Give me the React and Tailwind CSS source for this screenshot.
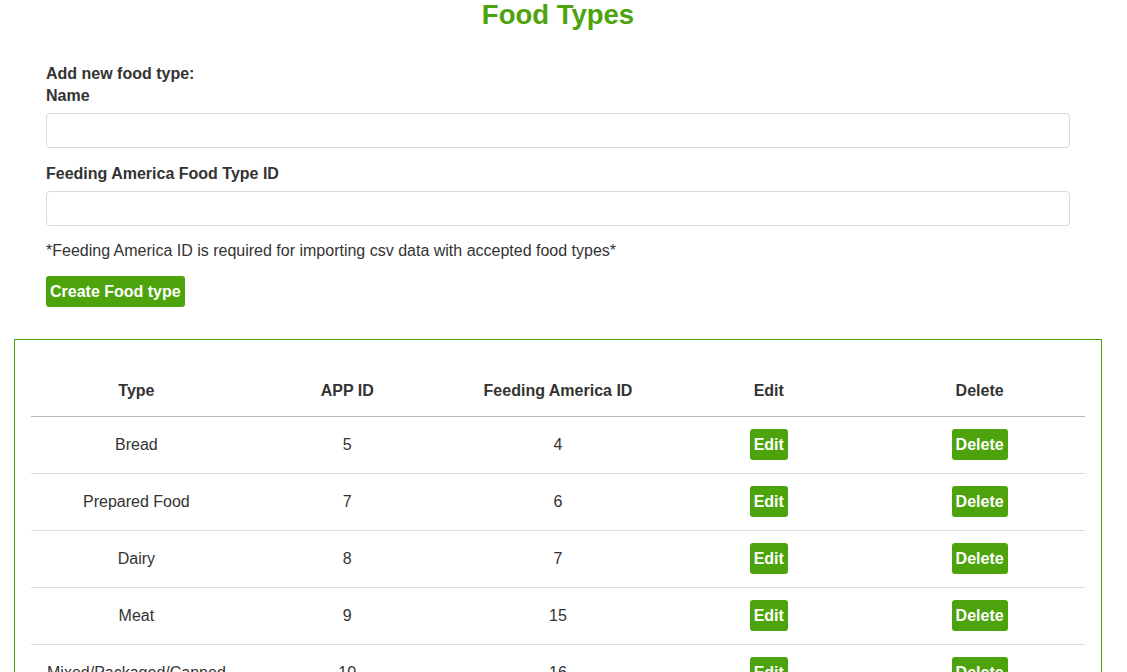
import React from 'react';

const foodTypes = [
  { name: 'Bread', appId: 5, faId: 4 },
  { name: 'Prepared Food', appId: 7, faId: 6 },
  { name: 'Dairy', appId: 8, faId: 7 },
  { name: 'Meat', appId: 9, faId: 15 },
  { name: 'Mixed/Packaged/Canned', appId: 10, faId: 16 },
];

const GreenButton = ({ children }) => (
  <button className="h-[31px] px-1 rounded-[3px] bg-[#4ca30b] text-white font-bold text-[16px] leading-none">
    {children}
  </button>
);

export default function App() {
  return (
    <div className="min-h-screen bg-white text-[#333] font-['Liberation_Sans',Arial,sans-serif] pb-10">
      <h1 className="w-[1116px] text-center text-[27.5px] leading-[30px] font-bold text-[#4ca30b]">Food Types</h1>

      <div className="mx-[46px] w-[1024px] mt-[33px]">
        <p className="text-[16px] leading-[22px] font-bold">Add new food type:</p>
        <label className="block text-[16px] leading-[22px] font-bold">Name</label>
        <input className="mt-[6px] block w-full h-[35px] border border-[#d9d9d9] rounded-[4px] px-2" />
        <label className="block mt-[15px] text-[16px] leading-[22px] font-bold">Feeding America Food Type ID</label>
        <input className="mt-[6px] block w-full h-[35px] border border-[#d9d9d9] rounded-[4px] px-2" />
        <p className="mt-[14px] text-[16px] leading-[22px]">
          *Feeding America ID is required for importing csv data with accepted food types*
        </p>
        <div className="mt-[14px]">
          <GreenButton>Create Food type</GreenButton>
        </div>
      </div>

      <div className="ml-[14px] w-[1088px] mt-[32px] border border-[#4ca30b] px-4 pt-[27px] pb-6">
        <table className="w-full table-fixed text-[16px]">
          <thead>
            <tr className="h-[49px] border-b border-[#b8b8b8]">
              {['Type', 'APP ID', 'Feeding America ID', 'Edit', 'Delete'].map((h) => (
                <th key={h} className="font-bold text-center">{h}</th>
              ))}
            </tr>
          </thead>
          <tbody>
            {foodTypes.map((f) => (
              <tr key={f.name} className="h-[57px] border-b border-[#dcdcdc]">
                <td className="text-center">{f.name}</td>
                <td className="text-center">{f.appId}</td>
                <td className="text-center">{f.faId}</td>
                <td className="text-center"><GreenButton>Edit</GreenButton></td>
                <td className="text-center"><GreenButton>Delete</GreenButton></td>
              </tr>
            ))}
          </tbody>
        </table>
      </div>
    </div>
  );
}
